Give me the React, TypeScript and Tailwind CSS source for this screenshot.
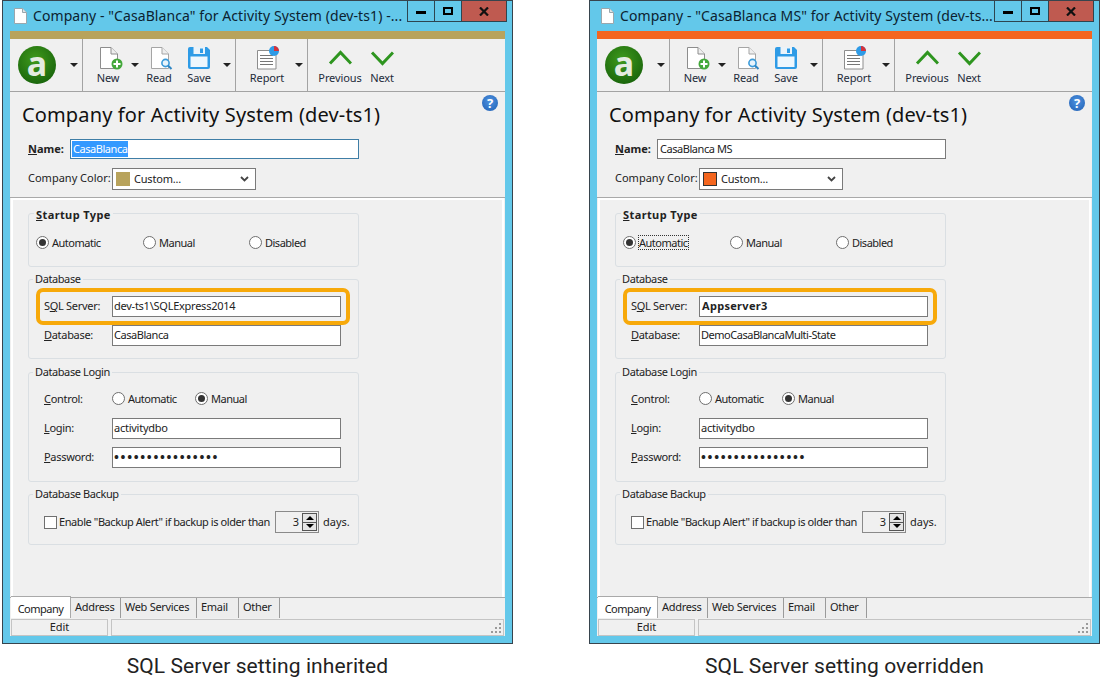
import React from "react";

type PanelProps = {
  title: string;
  color: string;
  swatchBorder: string;
  name: string;
  selected?: boolean;
  sql: string;
  sqlBold?: boolean;
  db: string;
  focus?: boolean;
};

function Arrow() {
  return <div className="w-0 h-0 border-x-[4px] border-x-transparent border-t-[4px] border-t-[#222]" />;
}

function DocBase({ stroke = "#8d8d8d" }: { stroke?: string }) {
  return (
    <>
      <path d="M1.5 1.5H12L18.5 8V22.5H1.5Z" fill="#fff" stroke={stroke} />
      <path d="M12 1.5V8H18.5" fill="#eee" stroke={stroke} />
    </>
  );
}

function NewIcon() {
  return (
    <svg width="24" height="24" viewBox="0 0 24 24" className="ml-[6px]">
      <DocBase />
      <circle cx="18" cy="18" r="5.5" fill="#43a83a" />
      <path d="M18 14.5V21.5M14.5 18H21.5" stroke="#fff" strokeWidth="2" />
    </svg>
  );
}
function ReadIcon() {
  return (
    <svg width="24" height="24" viewBox="0 0 24 24" className="ml-[6px]">
      <DocBase stroke="#a5a5a5" />
      <circle cx="15.5" cy="17" r="3.6" fill="#e8f4fc" stroke="#3a9ad9" strokeWidth="1.6" />
      <path d="M18 19.5L21.5 23" stroke="#2f86c4" strokeWidth="2" />
    </svg>
  );
}
function SaveIcon() {
  return (
    <svg width="24" height="24" viewBox="0 0 24 24">
      <path d="M3 1H20L23 4V21a2 2 0 0 1-2 2H3a2 2 0 0 1-2-2V3a2 2 0 0 1 2-2Z" fill="#2e9be6" />
      <rect x="3.5" y="10.5" width="17" height="10.5" fill="#eef7fd" />
      <rect x="6.5" y="1" width="11.5" height="7" fill="#eaf3fa" />
      <rect x="13" y="2.5" width="3" height="4.5" fill="#2e9be6" />
    </svg>
  );
}
function ReportIcon() {
  return (
    <svg width="26" height="24" viewBox="0 0 26 24">
      <path d="M3.5 4.5H22V23H3.5Z" fill="#fff" stroke="#8d8d8d" />
      <path d="M6 9.500H19M6 12.500H19M6 15.500H19M6 18.500H19" stroke="#777" />
      <circle cx="20" cy="5" r="5" fill="#2e9be6" />
      <path d="M20 5V0A5 5 0 0 1 25 5Z" fill="#d5323a" />
    </svg>
  );
}
function Chevron({ up }: { up?: boolean }) {
  return (
    <svg width="24" height="24" viewBox="0 0 24 24">
      <path d={up ? "M2 17.500L12.500 6.500L23 17.500" : "M2 6.500L12.500 17.500L23 6.500"} fill="none" stroke="#2e951f" strokeWidth="3" />
    </svg>
  );
}
function ToolButton({ label, w, icon }: { label: string; w: string; icon: React.ReactNode }) {
  return (
    <div className={`flex flex-col items-center ${w}`}>
      <div className="h-[24px] mt-[7px] flex items-center justify-center">{icon}</div>
      <div className="text-[11px] leading-[15px] tracking-[-0.1px] text-[#1d2b3a]">{label}</div>
    </div>
  );
}
function Logo() {
  return (
    <svg width="38" height="38" viewBox="0 0 38 38" className="overflow-visible">
      <defs>
        <radialGradient id="lg" cx="0.45" cy="0.35" r="0.75">
          <stop offset="0" stopColor="#3f9a1c" />
          <stop offset="1" stopColor="#155f0a" />
        </radialGradient>
      </defs>
      <circle cx="19" cy="19" r="19" fill="url(#lg)" />
      <text x="19" y="30" textAnchor="middle" fontSize="34" fontWeight="700" fill="#e4ebe0" fontFamily="'Noto Sans', sans-serif">a</text>
    </svg>
  );
}
function Radio({ checked }: { checked?: boolean }) {
  return (
    <span className="w-[13px] h-[13px] rounded-full border border-[#6f6f6f] bg-white flex items-center justify-center shrink-0">
      {checked && <span className="w-[7px] h-[7px] rounded-full bg-[#333]" />}
    </span>
  );
}
function RadioItem({ label, checked, w, focus }: { label: string; checked?: boolean; w: string; focus?: boolean }) {
  return (
    <div className={`flex items-center gap-[3px] tracking-[-0.5px] ${w}`}>
      <Radio checked={checked} />
      <span className={focus ? "outline-1 outline-dotted outline-[#333] leading-[13px]" : "leading-[13px]"}>{label}</span>
    </div>
  );
}
function Field({ value, cls = "tracking-[-0.25px]" }: { value: string; cls?: string }) {
  return (
    <div className={`w-[229px] h-[21px] border border-[#7a7a7a] bg-white px-[1px] flex items-center whitespace-nowrap overflow-hidden ${cls}`}>
      {value}
    </div>
  );
}
function Row({ label, children }: { label: React.ReactNode; children: React.ReactNode }) {
  return (
    <div className="flex items-center">
      <div className="w-[68px] tracking-[-0.3px]">{label}</div>
      {children}
    </div>
  );
}
function Group({ title, h, bold, children }: { title: React.ReactNode; h: string; bold?: boolean; children: React.ReactNode }) {
  return (
    <fieldset className={`w-[331px] ${h} border border-[#dadfe3] rounded-[3px]`}>
      <legend className={`px-[2px] leading-[14px] ${bold ? "ml-[5px] font-bold tracking-[0.4px] text-[#222] pt-[3px]" : "ml-[4px] tracking-[-0.4px]"}`}>{title}</legend>
      {children}
    </fieldset>
  );
}

function CompanyWindow({ title, color, swatchBorder, name, selected, sql, sqlBold, db, focus }: PanelProps) {
  const tabs: [string, string][] = [
    ["Address", "w-[50px]"],
    ["Web Services", "w-[76px]"],
    ["Email", "w-[42px]"],
    ["Other", "w-[41px]"],
  ];
  return (
    <div className="w-[511px] h-[644px] border border-[#37444d] bg-[#63c8ea] flex flex-col text-[11px] text-[#222]">
      <div className="h-[30px] flex items-start shrink-0">
        <div className="ml-[11px] mt-[7px] w-[13px]">
          <svg width="13" height="16" viewBox="0 0 13 16">
            <path d="M.5.5H8.500L12.500 4.500V15.500H.5Z" fill="#fff" stroke="#9aa7ad" />
            <path d="M8.500.5V4.500H12.500" fill="#dfe5e8" stroke="#9aa7ad" />
          </svg>
        </div>
        <div className="ml-[6px] mt-[5px] w-[373px] text-[14px] leading-[20px] tracking-[0.08px] whitespace-nowrap overflow-hidden text-[#0c2230]">{title}</div>
        <div className="ml-[1px] flex h-[21px]">
          <div className="w-[28px] border border-t-0 border-[#2d4550] flex items-center justify-center">
            <div className="w-[10px] h-[3px] mt-[2px] bg-black" />
          </div>
          <div className="w-[27px] border-b border-r border-[#2d4550] flex items-center justify-center">
            <div className="w-[10px] h-[8px] border-2 border-black" />
          </div>
          <div className="w-[45px] bg-[#bf5a50] border-b border-r border-[#2d4550] flex items-center justify-center">
            <svg width="10" height="9" viewBox="0 0 10 9"><path d="M1 .5L9 8.500M9 .5L1 8.500" stroke="#111" strokeWidth="2.200" /></svg>
          </div>
        </div>
      </div>

      <div className="mx-[7px] flex-1 flex flex-col bg-[#f0f0f0] min-h-0">
        <div className="h-[8px] shrink-0" style={{ backgroundColor: color }} />
        <div className="h-[53px] shrink-0 flex border-b border-[#a3a3a3]">
          <div className="w-[73px] border-r border-[#a3a3a3] flex items-center pl-[8px]">
            <Logo />
            <div className="ml-[14px]"><Arrow /></div>
          </div>
          <div className="w-[153px] border-r border-[#a3a3a3] flex pl-[1px]">
            <ToolButton label="New" w="w-[48px]" icon={<NewIcon />} />
            <div className="w-[8px] pt-[24px] -mx-[1px]"><Arrow /></div>
            <ToolButton label="Read" w="w-[42px]" icon={<ReadIcon />} />
            <ToolButton label="Save" w="w-[38px]" icon={<SaveIcon />} />
            <div className="w-[8px] pt-[24px] ml-[5px]"><Arrow /></div>
          </div>
          <div className="w-[72px] border-r border-[#a3a3a3] flex pl-[6px]">
            <ToolButton label="Report" w="w-[50px]" icon={<ReportIcon />} />
            <div className="w-[8px] pt-[24px] ml-[3px]"><Arrow /></div>
          </div>
          <div className="flex pl-[8px]">
            <ToolButton label="Previous" w="w-[48px]" icon={<Chevron up />} />
            <ToolButton label="Next" w="w-[36px]" icon={<Chevron />} />
          </div>
        </div>

        <div className="h-[106px] shrink-0 relative border-b border-[#a9a9a9] pl-[12px]">
          <div className="pt-[9px] text-[20px] leading-[28px] tracking-[0.14px] whitespace-nowrap text-[#111]">Company for Activity System (dev-ts1)</div>
          <div className="absolute right-[7px] top-[3px] w-[16px] h-[16px] rounded-full bg-[radial-gradient(circle_at_50%_40%,#4f93e0,#1f5fb4)] text-white font-bold text-[13px] leading-[16px] text-center">?</div>
          <div className="mt-[10px] ml-[6px] flex items-center">
            <div className="w-[42px] font-bold"><u>N</u>ame:</div>
            <div className={`w-[289px] h-[20px] border bg-white px-[1px] flex items-center tracking-[-0.45px] ${selected ? "border-[#3f7ea6]" : "border-[#7a7a7a]"}`}>
              <span className={selected ? "bg-[#3399ff] text-white px-[1px]" : "px-[1px]"}>{name}</span>
            </div>
          </div>
          <div className="mt-[9px] ml-[6px] flex items-center">
            <div className="w-[84px] pb-[2px]">Company Color:</div>
            <div className="w-[144px] h-[22px] border border-[#7a7a7a] bg-white flex items-center px-[3px]">
              <div className="w-[14px] h-[14px] border" style={{ backgroundColor: color, borderColor: swatchBorder }} />
              <span className="ml-[4px] flex-1 tracking-[-0.2px]">Custom...</span>
              <svg width="9" height="6" viewBox="0 0 9 6" className="mr-[3px]"><path d="M1 1L4.500 4.500L8 1" fill="none" stroke="#444" strokeWidth="1.800" /></svg>
            </div>
          </div>
        </div>

        <div className="flex-1 min-h-0 mx-[1px] border-t-2 border-l-2 border-r-2 border-white pl-[15px] pt-[5px] flex flex-col">
          <Group title={<><u>S</u>tartup Type</>} h="h-[62px]" bold>
            <div className="pl-[7px] pt-[14px] flex items-center">
              <RadioItem label="Automatic" checked w="w-[107px]" focus={focus} />
              <RadioItem label="Manual" w="w-[106px]" />
              <RadioItem label="Disabled" w="w-[90px]" />
            </div>
          </Group>
          <Group title="Database" h="h-[87px] mt-[5px]">
            <div className="pl-[15px] pt-[10px] flex flex-col gap-[8px]">
              <div className="relative">
                <Row label={<>S<u>Q</u>L Server:</>}>
                  <Field value={sql} cls={sqlBold ? "font-bold tracking-[0.3px] pl-[2px]" : undefined} />
                </Row>
                <div className="absolute -left-[8px] -top-[8px] w-[314px] h-[37px] border-[4px] border-[#f7a90a] rounded-[7px] pointer-events-none" />
              </div>
              <Row label={<><u>D</u>atabase:</>}>
                <Field value={db} cls={db.length > 20 ? "tracking-[-0.48px]" : "tracking-[-0.45px]"} />
              </Row>
            </div>
          </Group>
          <Group title="Database Login" h="h-[117px] mt-[6px]">
            <div className="pl-[15px] pt-[10px] flex flex-col">
              <Row label={<><u>C</u>ontrol:</>}>
                <div className="flex items-center h-[20px] pb-[1px]">
                  <RadioItem label="Automatic" w="w-[83px]" />
                  <RadioItem label="Manual" checked w="w-[60px]" />
                </div>
              </Row>
              <div className="mt-[9px]">
                <Row label={<><u>L</u>ogin:</>}>
                  <Field value="activitydbo" />
                </Row>
              </div>
              <div className="mt-[8px]">
                <Row label={<><u>P</u>assword:</>}>
                  <Field value="••••••••••••••••" cls="text-[13px] tracking-[1.68px] font-bold" />
                </Row>
              </div>
            </div>
          </Group>
          <Group title="Database Backup" h="h-[58px] mt-[5px]">
            <div className="pl-[15px] pt-[10px] flex items-center h-[32px]">
              <div className="w-[13px] h-[13px] border border-[#6f6f6f] bg-white shrink-0" />
              <span className="ml-[2px] w-[216px] whitespace-nowrap tracking-[-0.42px]">Enable "Backup Alert" if backup is older than</span>
              <div className="w-[44px] h-[22px] border border-[#8a8a8a] flex items-center justify-end pr-[1px]">
                <span className="mr-[3px]">3</span>
                <div className="w-[15px] h-[18px] flex flex-col border border-[#555]">
                  <div className="flex-1 border-b border-[#555] bg-[#e4e4e4] flex items-center justify-center">
                    <div className="w-0 h-0 border-x-[4px] border-x-transparent border-b-[4px] border-b-black" />
                  </div>
                  <div className="flex-1 bg-[#e4e4e4] flex items-center justify-center">
                    <div className="w-0 h-0 border-x-[4px] border-x-transparent border-t-[4px] border-t-black" />
                  </div>
                </div>
              </div>
              <span className="ml-[4px]">days.</span>
            </div>
          </Group>
        </div>

        <div className="h-[21px] shrink-0 flex items-end border-t border-[#a9a9a9] relative">
          <div className="w-[60px] h-[22px] -mt-[2px] ml-[1px] bg-white border-t border-r border-[#a9a9a9] flex items-center justify-center pt-[3px] tracking-[-0.5px]">Company</div>
          {tabs.map(([t, w]) => (
            <div key={t} className={`${w} h-[20px] bg-[#ededed] border-r border-[#9a9a9a] flex items-center pl-[4px] pb-[2px] tracking-[-0.3px]`}>{t}</div>
          ))}
        </div>
        <div className="h-[18px] shrink-0 flex gap-[3px] px-[1px] pt-[1px]">
          <div className="w-[97px] border border-[#c4c4c4] flex items-center justify-center">Edit</div>
          <div className="flex-1 border border-[#c4c4c4] flex items-end justify-end p-[1px]">
            <svg width="11" height="11" viewBox="0 0 11 11" fill="#9a9a9a">
              <rect x="8" y="0" width="2" height="2" />
              <rect x="4" y="4" width="2" height="2" />
              <rect x="8" y="4" width="2" height="2" />
              <rect x="0" y="8" width="2" height="2" />
              <rect x="4" y="8" width="2" height="2" />
              <rect x="8" y="8" width="2" height="2" />
            </svg>
          </div>
        </div>
      </div>
      <div className="h-[7px] shrink-0" />
    </div>
  );
}

function Column({ caption, ...props }: PanelProps & { caption: string }) {
  return (
    <div className="w-[511px] flex flex-col items-center">
      <CompanyWindow {...props} />
      <div className="mt-[10px] text-[21px] leading-[24px] tracking-[0.1px] text-[#222] font-[Roboto,sans-serif]">{caption}</div>
    </div>
  );
}

export default function App() {
  return (
    <div className="w-[1105px] h-[681px] bg-white overflow-hidden flex gap-[76px] pl-[2px] font-['Noto_Sans',sans-serif]">
      <Column
        caption="SQL Server setting inherited"
        title={'Company - "CasaBlanca" for Activity System (dev-ts1) -...'}
        color="#b8a35c"
        swatchBorder="#b8a35c"
        name="CasaBlanca"
        selected
        sql="dev-ts1\SQLExpress2014"
        db="CasaBlanca"
      />
      <Column
        caption="SQL Server setting overridden"
        title={'Company - "CasaBlanca MS" for Activity System (dev-ts...'}
        color="#f4661f"
        swatchBorder="#333"
        name="CasaBlanca MS"
        sql="Appserver3"
        sqlBold
        db="DemoCasaBlancaMulti-State"
        focus
      />
    </div>
  );
}
